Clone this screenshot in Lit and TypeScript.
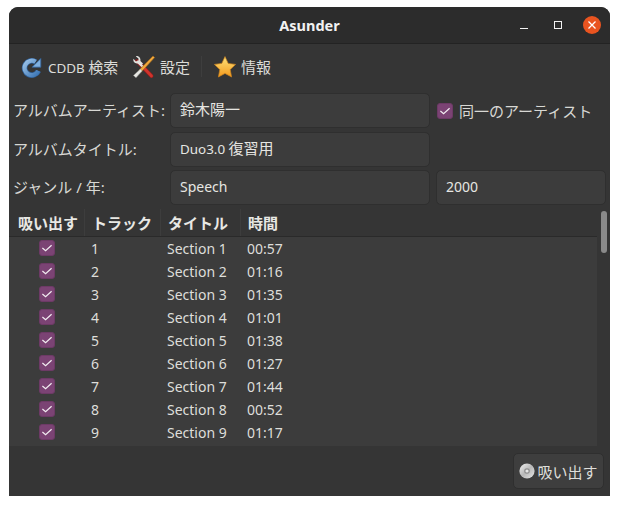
import { LitElement, html, css } from "lit";
import { customElement } from "lit/decorators.js";

const tracks = [
  ["1", "Section 1", "00:57"],
  ["2", "Section 2", "01:16"],
  ["3", "Section 3", "01:35"],
  ["4", "Section 4", "01:01"],
  ["5", "Section 5", "01:38"],
  ["6", "Section 6", "01:27"],
  ["7", "Section 7", "01:44"],
  ["8", "Section 8", "00:52"],
  ["9", "Section 9", "01:17"],
];

const check = html`<span class="check"><svg width="12" height="12" viewBox="0 0 12 12"><path d="M1.4 6 4.6 8.8 10.6 3.2" fill="none" stroke="#f3edf2" stroke-width="1.2"/></svg></span>`;

const refreshIcon = html`<svg class="ico" width="22" height="22" viewBox="0 0 22 22">
  <defs><linearGradient id="bl" x1="0" y1="0" x2="1" y2="1"><stop offset="0" stop-color="#9cc3e8"/><stop offset="1" stop-color="#3a75b5"/></linearGradient></defs>
  <path d="M17.4 14.8A7.2 7.2 0 1 1 14.6 5.8" fill="none" stroke="#2f5f97" stroke-width="5.6"/>
  <path d="M17.4 14.8A7.2 7.2 0 1 1 14.6 5.8" fill="none" stroke="url(#bl)" stroke-width="4.2"/>
  <path d="M19.8 2.4V11.2H11Z" fill="#7fb0e0" stroke="#2f5f97" stroke-width=".8"/>
</svg>`;

const toolsIcon = html`<svg class="ico" width="24" height="24" viewBox="0 0 24 24">
  <path d="M5 6 19.5 21" stroke="#8a1f1f" stroke-width="4" stroke-linecap="round"/>
  <path d="M11 12 19.5 21" stroke="#d0342c" stroke-width="2.8" stroke-linecap="round"/>
  <path d="M5 6 11 12" stroke="#d8d8d4" stroke-width="2.4"/>
  <path d="M3.8 1.2 6.6 3.8 6.2 6 4 6.4 1.4 3.8C.8 6.6 2.8 9 6 8.4L8.6 11 11 8.6 8.4 6C9 3 6.6.6 3.8 1.2Z" fill="#e2e2de"/>
  <path d="M22.6 2.6 21 1 7 15.2 9 17.2Z" fill="#f0a83c" stroke="#a86a18" stroke-width=".6"/>
  <path d="M8.4 14 10.2 15.9 4 22.8 1.4 20.4Z" fill="#e6e6e2" stroke="#8a8a86" stroke-width=".5"/>
</svg>`;

const starIcon = html`<svg class="ico" width="24" height="24" viewBox="0 0 24 24">
  <defs><linearGradient id="st" x1="0" y1="0" x2="0" y2="1"><stop offset="0" stop-color="#fde27a"/><stop offset="1" stop-color="#f39a1d"/></linearGradient></defs>
  <path d="M12 1.6 15.2 8.4 22.6 9.4 17.2 14.6 18.6 22 12 18.4 5.4 22 6.8 14.6 1.4 9.4 8.8 8.4Z" fill="url(#st)" stroke="#c9811c" stroke-width=".7" stroke-linejoin="round"/>
</svg>`;

const cdIcon = html`<svg class="cd" width="16" height="16" viewBox="0 0 16 16">
  <defs><linearGradient id="cdg" x1="0" y1="0" x2="1" y2="1"><stop offset="0" stop-color="#f2f2f2"/><stop offset=".5" stop-color="#b8b8b8"/><stop offset="1" stop-color="#e8e8e8"/></linearGradient></defs>
  <circle cx="8" cy="8" r="7.6" fill="url(#cdg)"/>
  <circle cx="8" cy="8" r="2.8" fill="#8f8f8f"/>
  <circle cx="8" cy="8" r="1.6" fill="#e8e8e8"/>
</svg>`;

@customElement("app-root")
export class AppRoot extends LitElement {
  static styles = css`
    :host {
      display: block;
      width: 620px;
      height: 505px;
      background: #fff;
      overflow: hidden;
      font-family: "Noto Sans", "Noto Sans CJK JP", sans-serif;
      font-size: 15px;
      color: #dcdcd8;
    }
    .la { font-size: 14px; }
    .tight { font-size: 13.4px; }
    .win {
      margin: 7px 10px 0 9px;
      width: 601px;
      height: 489px;
      background: #353535;
      border-radius: 9px 9px 0 0;
      display: flex;
      flex-direction: column;
      overflow: hidden;
    }
    .titlebar {
      height: 37px;
      flex: none;
      box-sizing: border-box;
      background: #2c2c2c;
      border-bottom: 1px solid #232323;
      display: grid;
      grid-template-columns: 1fr auto 1fr;
      align-items: center;
      color: #f2f2f2;
      font-weight: 700;
      font-size: 14.5px;
    }
    .title { grid-column: 2; font-family: "Noto Sans", sans-serif; }
    .wm {
      grid-column: 3;
      justify-self: end;
      display: flex;
      align-items: center;
      gap: 20px;
      padding-right: 9px;
    }
    .wm svg { display: block; }
    .wm .min { margin-right: 4px; }
    .close {
      width: 18px;
      height: 18px;
      border-radius: 50%;
      background: #e95420;
      display: flex;
      align-items: center;
      justify-content: center;
    }
    .toolbar {
      height: 45px;
      flex: none;
      display: flex;
      align-items: center;
      padding-left: 12px;
      box-sizing: border-box;
    }
    .tool { display: flex; align-items: center; gap: 4px; white-space: nowrap; }
    .ico { display: block; flex: none; }
    .t1 { width: 100px; gap: 5px; }
    .t2 { margin-left: 11px; width: 58px; }
    .sep { width: 1px; height: 21px; background: #3e3e3e; margin-left: 11px; }
    .t3 { margin-left: 11px; }
    .form {
      flex: none;
      display: grid;
      grid-template-columns: 151px 260px 170px;
      grid-auto-rows: 35px;
      column-gap: 6px;
      row-gap: 3.5px;
      padding: 4px 4px 0 4px;
      align-items: center;
    }
    .label { white-space: nowrap; color: #d8d8d4; padding-bottom: 2px; }
    .entry {
      height: 35px;
      box-sizing: border-box;
      background: #3c3c3c;
      border: 1px solid #2f2f2f;
      border-radius: 5px;
      padding: 0 9px 2px;
      display: block;
      line-height: 31px;
      color: #e6e6e2;
      white-space: nowrap;
    }
    .same {
      display: flex;
      align-items: center;
      gap: 6px;
      white-space: nowrap;
      color: #d8d8d4;
      padding-left: 1px;
    }
    .check {
      width: 16px;
      height: 16px;
      flex: none;
      box-sizing: border-box;
      border-radius: 3px;
      background: #7b4374;
      border: 1px solid #6d3a66;
      display: flex;
      align-items: center;
      justify-content: center;
    }
    .tree {
      margin-top: 4px;
      height: 237px;
      flex: none;
      display: flex;
    }
    .list { flex: 1; display: flex; flex-direction: column; min-width: 0; }
    .head {
      height: 28px;
      flex: none;
      box-sizing: border-box;
      background: #353535;
      border-bottom: 1px solid #2a2a2a;
      display: grid;
      grid-template-columns: 76px 76px 80px 1fr;
      font-weight: 700;
      color: #e8e8e4;
    }
    .head span {
      display: flex;
      align-items: center;
      padding-left: 7px;
      padding-bottom: 1px;
      border-right: 1px solid #3d3d3d;
      box-sizing: border-box;
    }
    .head span:first-child { padding-left: 9px; }
    .head span:last-child { border-right: none; }
    .rows { flex: 1; background: #3c3c3c; }
    .row {
      height: 23px;
      display: grid;
      grid-template-columns: 76px 76px 80px 1fr;
      align-items: center;
      color: #dededa;
      font-size: 14px;
    }
    .row > span { padding-left: 6px; }
    .row > .cbc { padding-left: 30px; padding-bottom: 1px; }
    .bar {
      width: 13px;
      flex: none;
      background: #353535;
      padding: 2px 3px 0 4px;
      box-sizing: border-box;
    }
    .thumb { width: 6px; height: 42px; border-radius: 3px; background: #8a8a8a; }
    .footer {
      flex: 1;
      display: flex;
      justify-content: flex-end;
      align-items: flex-start;
      padding: 7px 6px 0 0;
    }
    .btn {
      height: 36px;
      width: 91px;
      box-sizing: border-box;
      background: #3e3e3e;
      border: 1px solid #2f2f2f;
      border-radius: 5px;
      display: flex;
      align-items: center;
      justify-content: center;
      gap: 2px;
      color: #dededa;
      white-space: nowrap;
    }
    .cd { display: block; flex: none; }
  `;

  render() {
    return html`
      <div class="win">
        <div class="titlebar">
          <span class="title">Asunder</span>
          <div class="wm">
            <svg class="min" width="10" height="10" viewBox="0 0 10 10"><path d="M1 8.5H9" stroke="#f2f2f2" stroke-width="1"/></svg>
            <svg width="10" height="10" viewBox="0 0 10 10"><rect x="1.5" y="1.5" width="7" height="7" fill="none" stroke="#f2f2f2" stroke-width="1"/></svg>
            <span class="close"><svg width="10" height="10" viewBox="0 0 10 10"><path d="M1.5 1.5 8.5 8.5M8.5 1.5 1.5 8.5" stroke="#fff" stroke-width="1.3"/></svg></span>
          </div>
        </div>
        <div class="toolbar">
          <div class="tool t1">${refreshIcon}<span><span class="tight">CDDB </span>検索</span></div>
          <div class="tool t2">${toolsIcon}<span>設定</span></div>
          <div class="sep"></div>
          <div class="tool t3">${starIcon}<span>情報</span></div>
        </div>
        <div class="form">
          <span class="label">アルバムアーティスト:</span>
          <div class="entry">鈴木陽一</div>
          <div class="same">${check}<span>同一のアーティスト</span></div>
          <span class="label">アルバムタイトル:</span>
          <div class="entry"><span class="tight">Duo3.0 </span>復習用</div>
          <span></span>
          <span class="label">ジャンル / 年:</span>
          <div class="entry"><span class="la">Speech</span></div>
          <div class="entry"><span class="la">2000</span></div>
        </div>
        <div class="tree">
          <div class="list">
            <div class="head"><span>吸い出す</span><span>トラック</span><span>タイトル</span><span>時間</span></div>
            <div class="rows">
              ${tracks.map(
                (t) => html`<div class="row">
                  <span class="cbc">${check}</span>
                  <span>${t[0]}</span>
                  <span>${t[1]}</span>
                  <span>${t[2]}</span>
                </div>`
              )}
            </div>
          </div>
          <div class="bar"><div class="thumb"></div></div>
        </div>
        <div class="footer">
          <div class="btn">${cdIcon}<span>吸い出す</span></div>
        </div>
      </div>
    `;
  }
}
